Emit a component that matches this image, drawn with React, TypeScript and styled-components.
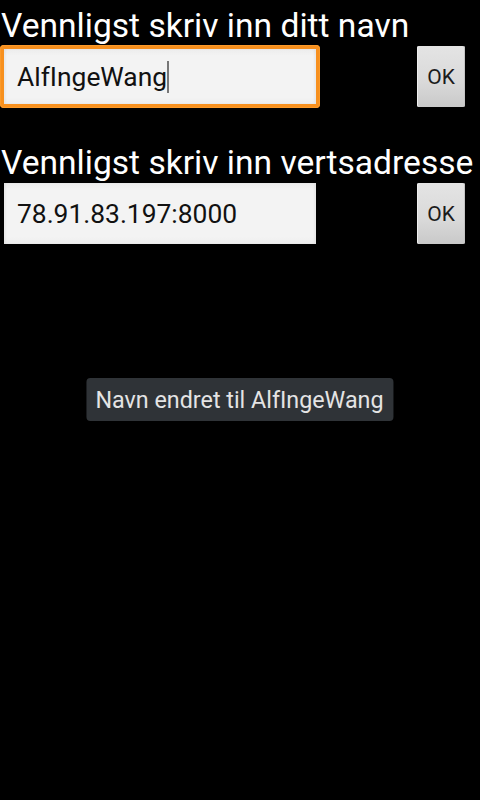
import React from "react";
import styled, { createGlobalStyle } from "styled-components";

const Global = createGlobalStyle`
  html, body { margin: 0; padding: 0; background: #000; }
  body { font-family: Roboto, "Noto Sans", "Liberation Sans", sans-serif; }
  #root { min-height: 800px; }
`;

const Page = styled.div`
  position: relative;
  width: 480px;
  height: 800px;
  background: #000;
  overflow: hidden;
  display: flex;
  flex-direction: column;
`;

const Title = styled.div<{ $top: number }>`
  margin-top: ${(p) => p.$top}px;
  height: 45px;
  padding-left: 1px;
  color: #ffffff;
  font-size: 33.6px;
  white-space: nowrap;
  display: flex;
  align-items: flex-end;
`;

const TitleText = styled.span`
  display: block;
  line-height: 1;
  transform: translateY(-2px);
`;

const Row = styled.div`
  display: flex;
  align-items: center;
  justify-content: space-between;
  height: 63px;
  padding-right: 15px;
`;

const FieldFrame = styled.div<{ $focused?: boolean }>`
  box-sizing: border-box;
  width: 320px;
  height: 63px;
  padding: ${(p) => (p.$focused ? "4px" : "1px 4px")};
  border-radius: 4px;
  background: ${(p) => (p.$focused ? "#f7901e" : "transparent")};
  box-shadow: ${(p) => (p.$focused ? "inset 0 0 0 1px #fb9a2a" : "none")};
  display: flex;
`;

const Field = styled.div`
  flex: 1;
  display: flex;
  align-items: center;
  padding-left: 13px;
  background: linear-gradient(#ececec, #f3f3f3 12%, #f3f3f3 88%, #ededed);
  box-shadow: inset 2px 0 2px rgba(0, 0, 0, 0.04), inset -2px 0 2px rgba(0, 0, 0, 0.04);
  color: #111;
  font-size: 26.4px;
  white-space: nowrap;
`;

const Caret = styled.span`
  display: inline-block;
  width: 2px;
  height: 32px;
  background: #777777;
`;

const OkButton = styled.button`
  box-sizing: border-box;
  width: 48px;
  height: 61px;
  padding: 0;
  border: none;
  border-radius: 2px;
  background: linear-gradient(#e4e4e4, #d9d9d9 60%, #c9c9c9);
  box-shadow: inset 1px 0 0 #eeeeee, inset -1px 0 0 #c4c4c4;
  color: #1c1c1c;
  font-family: Roboto, "Noto Sans", "Liberation Sans", sans-serif;
  font-size: 21px;
  display: flex;
  align-items: center;
  justify-content: center;
`;

const Toast = styled.div`
  position: absolute;
  top: 378px;
  left: 50%;
  transform: translateX(-50%);
  box-sizing: border-box;
  height: 43px;
  padding: 0 10px 0 9px;
  border-radius: 4px;
  background: #2f3337;
  color: #e4e4e4;
  font-size: 23.3px;
  white-space: nowrap;
  display: flex;
  align-items: center;
`;

export default function App() {
  return (
    <Page>
      <Global />
      <Title $top={0}>
        <TitleText>Vennligst skriv inn ditt navn</TitleText>
      </Title>
      <Row>
        <FieldFrame $focused>
          <Field>
            AlfIngeWang
            <Caret />
          </Field>
        </FieldFrame>
        <OkButton>OK</OkButton>
      </Row>
      <Title $top={29}>
        <TitleText>Vennligst skriv inn vertsadresse</TitleText>
      </Title>
      <Row>
        <FieldFrame>
          <Field>78.91.83.197:8000</Field>
        </FieldFrame>
        <OkButton>OK</OkButton>
      </Row>
      <Toast>Navn endret til AlfIngeWang</Toast>
    </Page>
  );
}
